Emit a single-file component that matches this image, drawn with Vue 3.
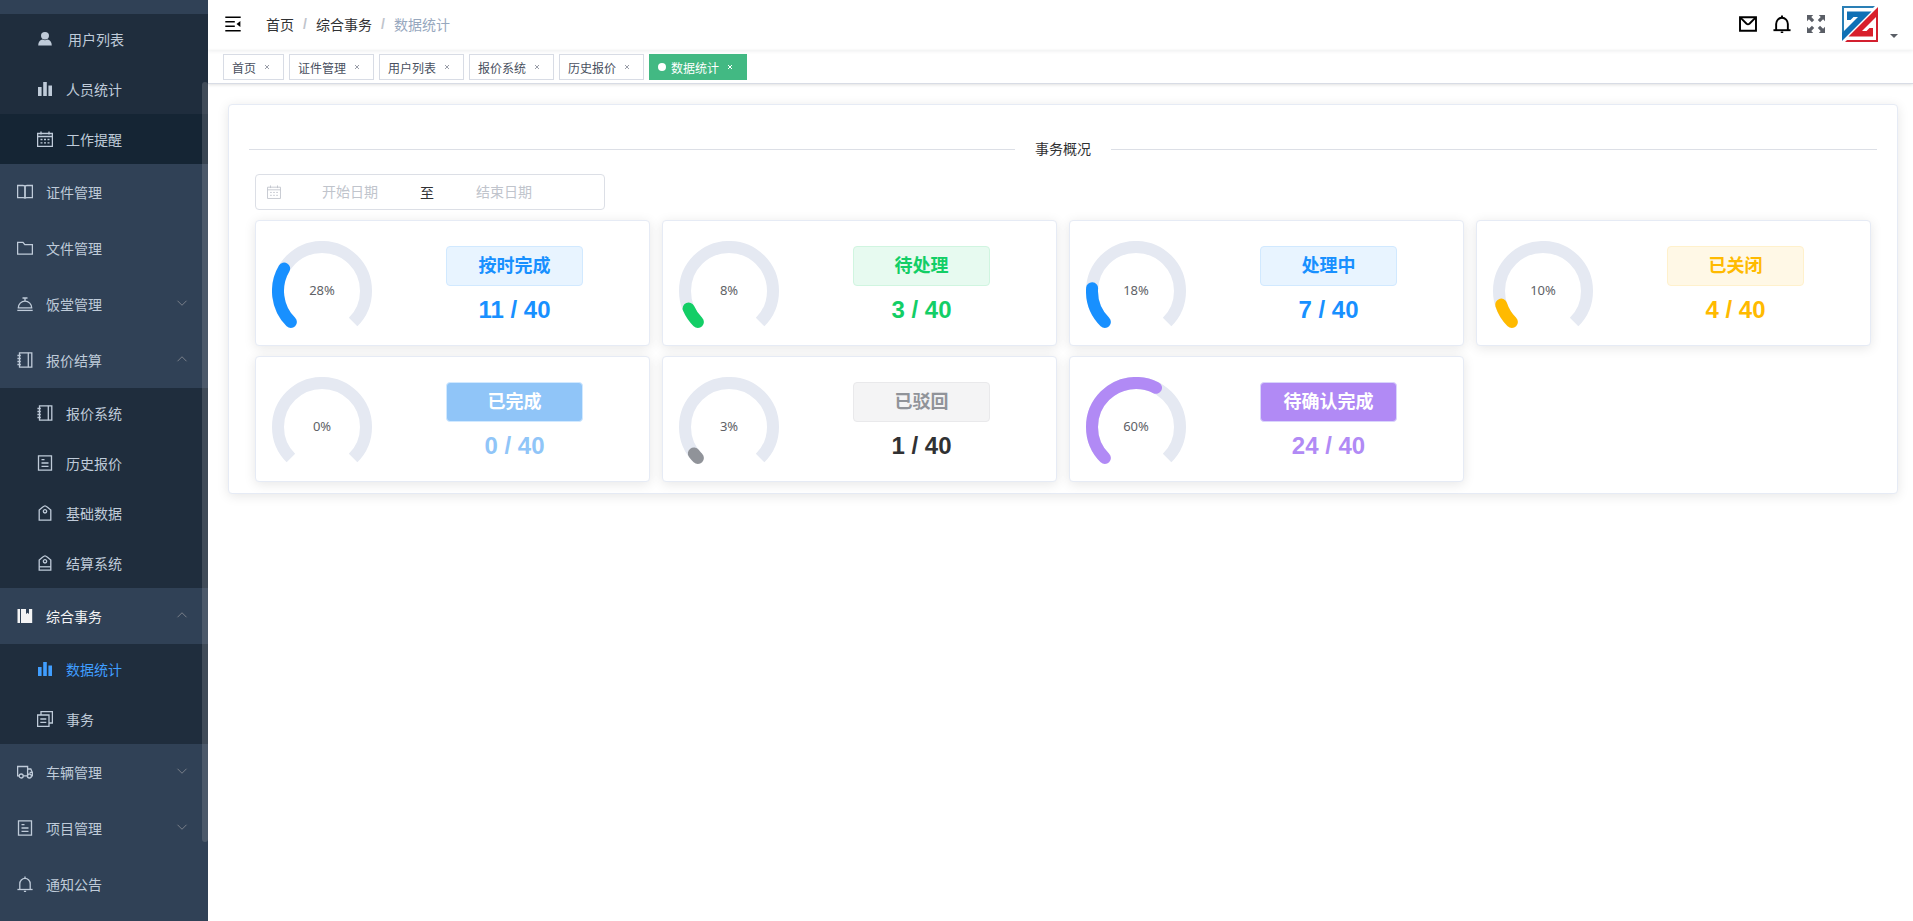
<script setup>
import { h } from 'vue'

// Each glyph is drawn on a 16×16 grid: "s" paths are stroked, "f" paths are filled.
const glyphs = {
  user: { f: ['M8 1a4 3.700 0 0 1 0 7.400a4 3.700 0 0 1 0-7.400z', 'M1.200 14.500c0-3.500 2-5.500 4.300-5.900c1.500.9 3.500.9 5 0c2.300.4 4.300 2.400 4.300 5.900z'] },
  bars: { f: ['M1 6h3.600v9h-3.600z', 'M6.200 1h3.600v14h-3.600z', 'M11.400 4.500h3.600v10.500h-3.600z'] },
  calendar: { s: ['M.6 2.500h14.800v12.900h-14.800z', 'M.6 5.500h14.800M4 .5v3M12 .5v3', 'M3.500 8.500h2M7 8.500h2M10.500 8.500h2M3.500 11.800h2M7 11.800h2M10.500 11.800h2'] },
  book: { s: ['M.6 1.500h5.400q2 0 2 1v12q0-.8-2-.8h-5.400z', 'M15.400 1.500h-5.400q-2 0-2 1v12q0-.8 2-.8h5.400z'] },
  folder: { s: ['M.6 2.300h5.400l1.800 2.300h7.600v9.600h-14.800z'] },
  dish: { s: ['M.3 14.400h15.400', 'M1.300 11.800a6.700 6.600 0 0 1 13.400 0z', 'M8 5v-2.800M5.500 2h5'] },
  notebook: { s: ['M2.500.8h12.300v14.400h-12.300z', 'M11.300.8v14.400', 'M.4 3.500h3.400M.4 6.500h3.400M.4 9.500h3.400M.4 12.500h3.400'] },
  document: { s: ['M1.500.8h13v14.400h-13z', 'M4.500 4.700h3M4.500 8h7M4.500 11.300h7'] },
  tag: { s: ['M8 .8q.8 0 2.500 1.400l3.300 2.800v10.200h-11.600v-10.200l3.300-2.800q1.700-1.400 2.500-1.400z', 'M8 4.600a1.700 1.700 0 0 1 0 3.400a1.700 1.700 0 0 1 0-3.400z'] },
  label: { s: ['M8 .8q.8 0 2.500 1.400l3.300 2.800v10.200h-11.600v-10.200l3.300-2.800q1.700-1.400 2.500-1.400z', 'M8 4.600a1.700 1.700 0 0 1 0 3.400a1.700 1.700 0 0 1 0-3.400z', 'M2.200 11.800h11.600'] },
  bookmark: { f: ['M.5 1h2.500v14h-2.500z', 'M4 1h5v5l1.500-1.200l1.500 1.200v-5h3.200v14h-11.200z'] },
  copy: { s: ['M.6 4h11.400v11.400h-11.400z', 'M4 4v-3.300h11.400v11.300h-3.400', 'M3.300 8h6M3.300 11.400h6'] },
  truck: { s: ['M2.200 11.800h-1.600v-9.300h10v9.300h-4.400', 'M10.600 5h3.200l1.600 3.400v3.400h-.8M12.600 8.400h2.800', 'M4.200 10a2 2 0 0 1 0 4a2 2 0 0 1 0-4z', 'M12.400 10a2 2 0 0 1 0 4a2 2 0 0 1 0-4z'] },
  bell: { s: ['M.4 13.500h15.200', 'M2.800 13.500v-5.500a5.200 5.600 0 0 1 10.400 0v5.500', 'M8 .4v2M6.900 15.500h2.200'] },
  mail: { s: ['M.9 2h14.200v12h-14.200z', 'M1.500 2.500l5.200 5.200q1.300 1 2.600 0l5.200-5.200'] },
  down: { s: ['M2 5l6 6l6-6'] },
  up: { s: ['M2 11l6-6l6 6'] },
  collapse: { s: ['M.3 1.200h15.400M.3 5.800h9.500M.3 10.200h9.500M.3 14.800h15.400'], f: ['M15.400 4.900v6.200l-3.900-3.100z'] },
  fullscreen: {
    f: ['M0 0h5.500l-1.700 1.700l2.600 2.700l-2 2l-2.700-2.600l-1.700 1.700z', 'M16 0v5.500l-1.700-1.700l-2.700 2.600l-2-2l2.600-2.700l-1.700-1.700z', 'M0 16v-5.500l1.700 1.700l2.700-2.600l2 2l-2.600 2.700l1.700 1.700z', 'M16 16h-5.500l1.700-1.700l-2.600-2.700l2-2l2.700 2.600l1.700-1.700z'],
  },
}

const Glyph = ({ name }) =>
  h('svg', { viewBox: '0 0 16 16', 'aria-hidden': 'true' }, [
    ...(glyphs[name].s || []).map((d) => h('path', { d, fill: 'none', stroke: 'currentColor' })),
    ...(glyphs[name].f || []).map((d) => h('path', { d, fill: 'currentColor', stroke: 'none' })),
  ])
Glyph.props = ['name']

const menu = [
  {
    title: '',
    children: [
      { title: '用户列表', icon: 'user', wide: true },
      { title: '人员统计', icon: 'bars' },
      { title: '工作提醒', icon: 'calendar', hovered: true },
    ],
  },
  { title: '证件管理', icon: 'book' },
  { title: '文件管理', icon: 'folder' },
  { title: '饭堂管理', icon: 'dish', arrow: 'down' },
  {
    title: '报价结算',
    icon: 'notebook',
    arrow: 'up',
    children: [
      { title: '报价系统', icon: 'notebook' },
      { title: '历史报价', icon: 'document' },
      { title: '基础数据', icon: 'tag' },
      { title: '结算系统', icon: 'label' },
    ],
  },
  {
    title: '综合事务',
    icon: 'bookmark',
    arrow: 'up',
    open: true,
    children: [
      { title: '数据统计', icon: 'bars', active: true },
      { title: '事务', icon: 'copy' },
    ],
  },
  { title: '车辆管理', icon: 'truck', arrow: 'down' },
  { title: '项目管理', icon: 'document', arrow: 'down' },
  { title: '通知公告', icon: 'bell' },
]

const tabs = ['首页', '证件管理', '用户列表', '报价系统', '历史报价', '数据统计']
const activeTab = '数据统计'

const total = 40
const stats = [
  { label: '按时完成', count: 11, percent: 28, tone: 'blue' },
  { label: '待处理', count: 3, percent: 8, tone: 'green' },
  { label: '处理中', count: 7, percent: 18, tone: 'blue' },
  { label: '已关闭', count: 4, percent: 10, tone: 'amber' },
  { label: '已完成', count: 0, percent: 0, tone: 'sky' },
  { label: '已驳回', count: 1, percent: 3, tone: 'grey' },
  { label: '待确认完成', count: 24, percent: 60, tone: 'violet' },
]

// Three quarters of a circle, open at the bottom, starting bottom left.
const gaugePath = 'M18.900 81.100A44 44 0 1 1 81.100 81.100'
</script>

<template>
  <div class="layout">
    <aside class="sidebar">
      <nav class="menu" aria-label="主菜单">
        <div v-for="(group, i) in menu" :key="i" class="group">
          <a v-if="group.title" href="#" class="item" :class="{ open: group.open }">
            <Glyph :name="group.icon" class="icon" />
            <span>{{ group.title }}</span>
            <Glyph v-if="group.arrow" :name="group.arrow" class="arrow" />
          </a>
          <div v-if="group.children" class="submenu">
            <a
              v-for="child in group.children"
              :key="child.title"
              href="#"
              class="item sub"
              :class="{ active: child.active, hovered: child.hovered, wide: child.wide }"
            >
              <Glyph :name="child.icon" class="icon" />
              <span>{{ child.title }}</span>
            </a>
          </div>
        </div>
      </nav>
      <div class="scrollbar"></div>
    </aside>

    <div class="main">
      <header class="navbar">
        <button class="tool" type="button" aria-label="收起菜单"><Glyph name="collapse" class="fold" /></button>
        <nav class="crumbs" aria-label="面包屑">
          <a href="#">首页</a><i>/</i><a href="#">综合事务</a><i>/</i><span>数据统计</span>
        </nav>
        <div class="actions">
          <button class="tool" type="button" aria-label="消息"><Glyph name="mail" class="action" /></button>
          <button class="tool" type="button" aria-label="通知"><Glyph name="bell" class="action" /></button>
          <button class="tool muted" type="button" aria-label="全屏"><Glyph name="fullscreen" class="action" /></button>
          <button class="tool account" type="button" aria-label="账户">
            <svg class="logo" viewBox="0 0 36 36" aria-hidden="true">
              <path d="M0 0h33l-2 2h-29v29l-2 2z" fill="#2a7fb5" />
              <path d="M5 5.500H29.500L0 35V27L16 11H11.500L8.500 14H5z" fill="#1070b5" />
              <path d="M36 3v33h-33l2-2h29v-29z" fill="#d3202f" />
              <path d="M31 30.500H6.500L36 1V9L20 25H24.500L27.500 22H31z" fill="#d81f2b" />
            </svg>
            <span class="caret"></span>
          </button>
        </div>
      </header>

      <div class="tabs">
        <div v-for="tab in tabs" :key="tab" class="tab" :class="{ current: tab === activeTab }">
          <a href="#">{{ tab }}</a>
          <button type="button" :aria-label="'关闭' + tab">
            <svg viewBox="0 0 16 16" aria-hidden="true"><path d="M6 6l4 4M10 6l-4 4" stroke="currentColor" fill="none" /></svg>
          </button>
        </div>
      </div>

      <main class="content">
        <section class="panel">
          <h2 class="divider"><span>事务概况</span></h2>
          <div class="range">
            <Glyph name="calendar" class="range-icon" />
            <input type="text" placeholder="开始日期" aria-label="开始日期" />
            <span>至</span>
            <input type="text" placeholder="结束日期" aria-label="结束日期" />
          </div>
          <div class="grid">
            <article v-for="s in stats" :key="s.label" class="card" :class="s.tone">
              <div class="gauge">
                <svg viewBox="0 0 100 100" aria-hidden="true">
                  <path class="track" :d="gaugePath" />
                  <path v-if="s.percent" class="bar" :d="gaugePath" pathLength="100" :stroke-dasharray="s.percent + ' 200'" />
                </svg>
                <span>{{ s.percent }}%</span>
              </div>
              <div class="info">
                <div class="badge">{{ s.label }}</div>
                <div class="count">{{ s.count }} / {{ total }}</div>
              </div>
            </article>
          </div>
        </section>
      </main>
    </div>
  </div>
</template>

<style>
body {
  margin: 0;
  background: #fff;
}
</style>

<style scoped>
* {
  box-sizing: border-box;
}
.layout {
  display: flex;
  height: 100vh;
  overflow: hidden;
  font-family: "Liberation Sans", "Noto Sans CJK SC", sans-serif;
  font-size: 14px;
  color: #303133;
}
a {
  color: inherit;
  text-decoration: none;
}
button {
  padding: 0;
  border: 0;
  background: none;
  color: inherit;
  font: inherit;
  cursor: pointer;
}
svg {
  display: block;
  flex: none;
}

.sidebar {
  position: relative;
  flex: none;
  width: 208px;
  overflow: hidden;
  background: #304156;
}
.menu {
  padding-top: 14px;
}
.item {
  display: flex;
  align-items: center;
  height: 56px;
  padding: 0 20px 0 17px;
  color: #bfcbd9;
}
.item span {
  flex: 1;
}
.icon {
  width: 16px;
  height: 16px;
  margin-right: 13px;
  stroke-width: 1.3;
}
.arrow {
  width: 12px;
  height: 12px;
  margin-bottom: 2px;
  color: #909399;
}
.submenu {
  background: #1f2d3d;
}
.sub {
  height: 50px;
  padding-left: 37px;
}
.wide .icon {
  margin-right: 15px;
}
.hovered {
  background: #152534;
}
.open {
  color: #f4f4f5;
}
.active {
  color: #409eff;
}
.scrollbar {
  position: absolute;
  top: 82px;
  right: 0;
  width: 6px;
  height: 760px;
  border-radius: 4px;
  background: rgba(144, 147, 153, 0.3);
}

.main {
  display: flex;
  flex: 1;
  flex-direction: column;
  min-width: 0;
}
.navbar {
  display: flex;
  flex: none;
  align-items: center;
  height: 50px;
  padding: 0 15px 2px 17px;
  box-shadow: 0 1px 4px rgba(0, 21, 41, 0.08);
}
.tool {
  color: #000;
}
.muted {
  color: #5a5e66;
}
.fold {
  width: 16px;
  height: 16px;
  stroke-width: 1.5;
}
.crumbs {
  display: flex;
  align-items: center;
  margin-left: 25px;
}
.crumbs i {
  width: 22px;
  color: #c0c4cc;
  font-style: normal;
  font-weight: 700;
  text-align: center;
}
.crumbs span {
  color: #97a8be;
}
.actions {
  display: flex;
  align-items: center;
  gap: 16px;
  margin-left: auto;
}
.action {
  width: 18px;
  height: 18px;
  stroke-width: 1.7;
}
.account {
  display: flex;
  align-items: flex-end;
  gap: 12px;
  margin-left: 1px;
}
.logo {
  width: 36px;
  height: 36px;
}
.caret {
  margin-bottom: 4px;
  border: 4px solid transparent;
  border-top-color: #5a5e66;
  border-bottom: 0;
}

.tabs {
  display: flex;
  flex: none;
  gap: 5px;
  height: 34px;
  padding: 4px 15px 0;
  border-bottom: 1px solid #d8dce5;
  box-shadow: 0 1px 3px rgba(0, 0, 0, 0.12);
}
.tab {
  display: flex;
  align-items: center;
  gap: 3px;
  height: 26px;
  padding: 0 8px;
  border: 1px solid #d8dce5;
  color: #495060;
  font-size: 12px;
}
.tab button {
  color: #9a9ea8;
}
.tab svg {
  width: 16px;
  height: 16px;
}
.current {
  border-color: #42b983;
  background: #42b983;
  color: #fff;
}
.current::before {
  width: 8px;
  height: 8px;
  margin-right: 2px;
  border-radius: 50%;
  background: #fff;
  content: "";
}
.current button {
  color: #fff;
}

.content {
  padding: 20px 15px 0 20px;
}
.panel {
  padding: 33px 20px 11px;
  border: 1px solid #e6ebf5;
  border-radius: 4px;
  background: #fff;
  box-shadow: 0 2px 12px rgba(0, 0, 0, 0.1);
}
.divider {
  display: flex;
  align-items: center;
  gap: 20px;
  height: 23px;
  margin: 0 0 13px;
  font-size: 14px;
  font-weight: 400;
}
.divider span {
  padding-bottom: 3px;
}
.divider::before,
.divider::after {
  flex: 1;
  height: 1px;
  background: #dcdfe6;
  content: "";
}
.range {
  display: flex;
  align-items: center;
  width: 350px;
  height: 36px;
  margin: 0 6px 10px;
  padding-left: 11px;
  border: 1px solid #dcdfe6;
  border-radius: 4px;
}
.range-icon {
  width: 14px;
  height: 14px;
  margin-right: 10px;
  color: #c0c4cc;
}
.range input {
  width: 118px;
  padding: 0;
  border: 0;
  outline: 0;
  background: none;
  color: #606266;
  font: inherit;
  text-align: center;
}
.range input::placeholder {
  color: #c0c4cc;
}
.range span {
  width: 36px;
  text-align: center;
}
.grid {
  display: grid;
  grid-template-columns: repeat(4, 1fr);
  gap: 10px 12px;
  margin: 0 6px;
}
.card {
  display: flex;
  height: 126px;
  padding: 20px 0 0 16px;
  border: 1px solid #e6ebf5;
  border-radius: 4px;
  background: #fff;
  box-shadow: 0 2px 12px rgba(0, 0, 0, 0.1);
}
.gauge {
  display: grid;
  flex: none;
  place-items: center;
  width: 100px;
  height: 100px;
}
.gauge svg,
.gauge span {
  grid-area: 1 / 1;
}
.gauge svg {
  width: 100px;
  height: 100px;
}
.gauge span {
  padding-bottom: 2px;
  color: #606266;
  font-family: "Noto Sans", sans-serif;
  font-size: 13px;
}
.gauge path {
  fill: none;
  stroke-width: 12;
}
.track {
  stroke: #e5e9f2;
}
.bar {
  stroke: var(--tone);
  stroke-linecap: round;
}
.info {
  display: flex;
  flex: 1;
  flex-direction: column;
  align-items: center;
  margin-left: 8px;
  padding-top: 5px;
  font-weight: 700;
}
.badge {
  width: 137px;
  height: 40px;
  border: 1px solid var(--edge);
  border-radius: 4px;
  background: var(--fill);
  color: var(--label);
  font-size: 18px;
  line-height: 38px;
  text-align: center;
}
.count {
  margin-top: 10px;
  color: var(--number, var(--tone));
  font-size: 24px;
  line-height: 28px;
}
.blue {
  --tone: #1890ff;
  --label: #1890ff;
  --fill: #e8f4ff;
  --edge: #d1e9ff;
}
.green {
  --tone: #13ce66;
  --label: #13ce66;
  --fill: #e7faf0;
  --edge: #d0f5e0;
}
.amber {
  --tone: #ffba00;
  --label: #ffba00;
  --fill: #fff8e6;
  --edge: #fff1cc;
}
.sky {
  --tone: #90c5f8;
  --label: #fff;
  --fill: #90c5f8;
  --edge: #d1e9ff;
}
.grey {
  --tone: #909399;
  --label: #909399;
  --fill: #f4f4f5;
  --edge: #e9e9eb;
  --number: #303133;
}
.violet {
  --tone: #b18af5;
  --label: #fff;
  --fill: #b18af5;
  --edge: #d9d4fb;
}
</style>
